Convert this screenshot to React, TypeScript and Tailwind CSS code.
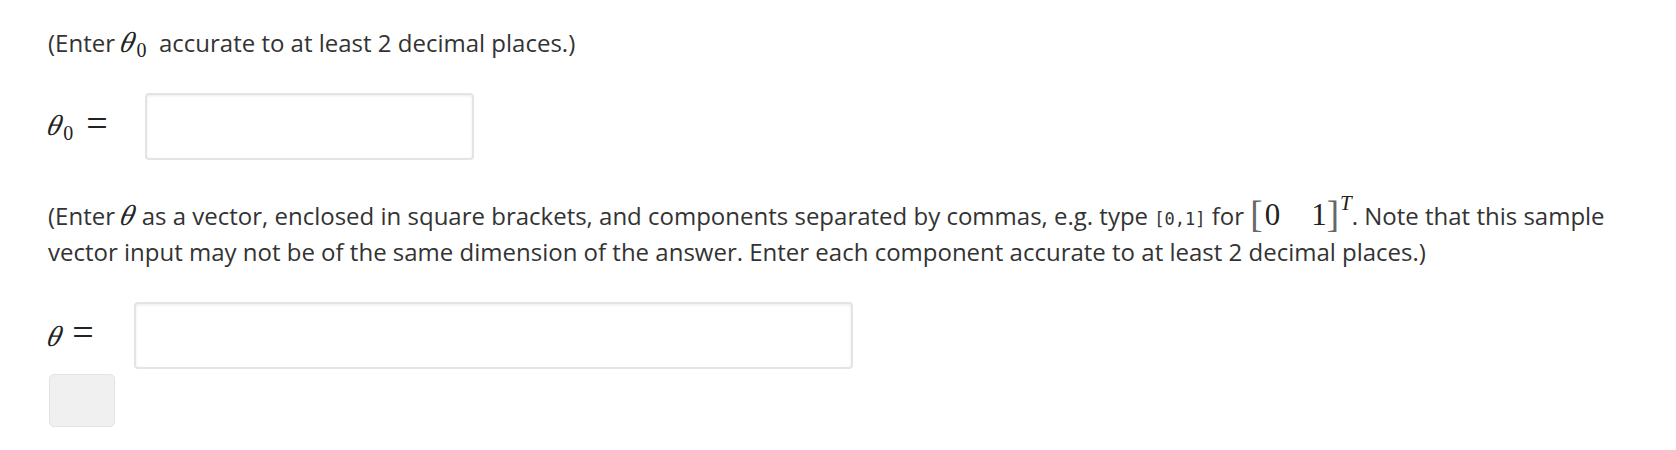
import React from "react";

const serif = { fontFamily: '"Liberation Serif", "Times New Roman", serif' };

function Theta({ sub }: { sub?: string }) {
  return (
    <span className="whitespace-nowrap text-[29px] leading-[0] text-[#222]" style={serif}>
      <span className="inline-block -skew-x-[14deg] italic">θ</span>
      {sub ? <span className="relative top-[5px] ml-[1px] text-[20px]">{sub}</span> : null}
    </span>
  );
}

function Eq() {
  return (
    <span className="text-[38px] leading-[0] text-[#222]" style={serif}>
      =
    </span>
  );
}

export default function App() {
  return (
    <div
      className="min-h-[450px] w-[1676px] bg-white pl-[48px] pr-[40px] text-[24px] leading-[36px] text-[#333]"
      style={{ fontFamily: '"Open Sans", "Noto Sans", sans-serif' }}
    >
      <p className="pt-[25px]">
        (Enter <Theta sub="0" />&nbsp; accurate to at least 2 decimal places.)
      </p>

      <div className="mt-[32px] flex h-[67px] items-center">
        <div className="flex w-[97px] items-center">
          <Theta sub="0" />
          <span className="ml-[13px]">
            <Eq />
          </span>
        </div>
        <div className="h-[67px] w-[329px] rounded-[4px] border-2 border-[#e4e4e4] bg-white shadow-[inset_0_1px_3px_rgba(0,0,0,0.08)]" />
      </div>

      <p className="mt-[38px]">
        (Enter <Theta /> as a vector, enclosed in square brackets, and components separated by commas, e.g. type{" "}
        <code className="text-[17px] leading-[0] text-[#333]" style={{ fontFamily: '"DejaVu Sans Mono", monospace' }}>
          [0,1]
        </code>{" "}
        for{" "}
        <span className="whitespace-nowrap text-[31px] leading-[0] text-[#222]" style={serif}>
          <span className="relative top-[2px] text-[37px] text-[#666]">[</span>
          <span className="ml-[2px]">0</span>
          <span className="ml-[31px]">1</span>
          <span className="relative top-[2px] text-[37px] text-[#666]">]</span>
          <span className="relative -top-[15px] ml-[1px] text-[21px] italic">T</span>
        </span>
        . Note that this sample vector input may not be of the same dimension of the answer. Enter each component accurate to at least 2 decimal places.)
      </p>

      <div className="mt-[32px] flex h-[67px] items-center">
        <div className="flex w-[86px] items-center">
          <Theta />
          <span className="ml-[10px]">
            <Eq />
          </span>
        </div>
        <div className="h-[67px] w-[719px] rounded-[4px] border-2 border-[#e4e4e4] bg-white shadow-[inset_0_1px_3px_rgba(0,0,0,0.08)]" />
      </div>

      <button className="mt-[5px] ml-[1px] block h-[53px] w-[66px] rounded-[5px] border border-[#e2e2e2] bg-[#f0f0f0]" />
    </div>
  );
}
